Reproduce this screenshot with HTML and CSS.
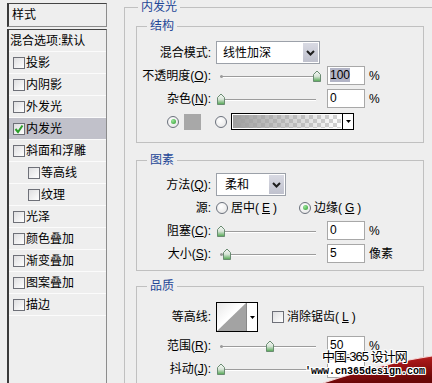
FILE: index.html
```html
<!DOCTYPE html>
<html lang="zh-CN">
<head>
    <meta charset="UTF-8">
    <meta name="viewport" content="width=device-width, initial-scale=1.0">
    <title>图层样式 - 内发光</title>
    <link rel="stylesheet" href="styles.css">
</head>
<body>

<svg class="defs" width="0" height="0" aria-hidden="true">
    <defs>
        <linearGradient id="thumbFill" x1="0" y1="0" x2="0" y2="1">
            <stop offset="0" stop-color="#f6f8f6"/>
            <stop offset="0.5" stop-color="#d8e4d8"/>
            <stop offset="1" stop-color="#4fa64f"/>
        </linearGradient>
        <symbol id="thumb" viewBox="0 0 10 12">
            <path d="M1.5 11.5V4.5L5 1l3.5 3.5v7z" fill="url(#thumbFill)" stroke="#6a8c72"/>
        </symbol>
        <symbol id="chevron" viewBox="0 0 9 6">
            <path d="M1 1l3.5 3.5L8 1" fill="none" stroke="#1e1e1e" stroke-width="2"/>
        </symbol>
        <symbol id="caret" viewBox="0 0 5 3">
            <path d="M0 0h5L2.5 3z" fill="#000"/>
        </symbol>
    </defs>
</svg>

<div class="dialog">
    <aside class="styles-panel">
        <div class="panel-title">样式</div>
        <ul class="style-list">
            <li class="blend">混合选项:默认</li>
            <li><span class="check"></span>投影</li>
            <li><span class="check"></span>内阴影</li>
            <li><span class="check"></span>外发光</li>
            <li class="active">
                <span class="check"><svg viewBox="0 0 10 10" width="10" height="10"><path d="M1.5 5l2.5 3L8.5 1.5" fill="none" stroke="#2a9f2a" stroke-width="2"/></svg></span>内发光
            </li>
            <li><span class="check"></span>斜面和浮雕</li>
            <li class="sub"><span class="check"></span>等高线</li>
            <li class="sub"><span class="check"></span>纹理</li>
            <li><span class="check"></span>光泽</li>
            <li><span class="check"></span>颜色叠加</li>
            <li><span class="check"></span>渐变叠加</li>
            <li><span class="check"></span>图案叠加</li>
            <li><span class="check"></span>描边</li>
        </ul>
    </aside>

    <main class="settings">
        <fieldset class="group outer">
            <legend>内发光</legend>

            <fieldset class="group structure">
                <legend>结构</legend>
                <div class="row">
                    <span class="label">混合模式:</span>
                    <div class="select mode"><span>线性加深</span><span class="drop"><svg><use href="#chevron"/></svg></span></div>
                </div>
                <div class="row">
                    <span class="label">不透明度(<u>O</u>):</span>
                    <div class="slider"><svg class="thumb" style="left:96px"><use href="#thumb"/></svg></div>
                    <span class="field"><span class="picked">100</span></span>
                    <span class="unit">%</span>
                </div>
                <div class="row">
                    <span class="label">杂色(<u>N</u>):</span>
                    <div class="slider"><svg class="thumb" style="left:0"><use href="#thumb"/></svg></div>
                    <span class="field">0</span>
                    <span class="unit">%</span>
                </div>
                <div class="row colors">
                    <span class="radio on"></span>
                    <span class="swatch"></span>
                    <span class="radio"></span>
                    <div class="gradient">
                        <span class="ramp"></span>
                        <span class="pick"><svg width="5" height="3"><use href="#caret"/></svg></span>
                    </div>
                </div>
            </fieldset>

            <fieldset class="group elements">
                <legend>图素</legend>
                <div class="row">
                    <span class="label">方法(<u>Q</u>):</span>
                    <div class="select method"><span>柔和</span><span class="drop"><svg><use href="#chevron"/></svg></span></div>
                </div>
                <div class="row">
                    <span class="label">源:</span>
                    <span class="choice"><span class="radio"></span>居中(<u>E</u>)</span>
                    <span class="choice"><span class="radio on"></span>边缘(<u>G</u>)</span>
                </div>
                <div class="row">
                    <span class="label">阻塞(<u>C</u>):</span>
                    <div class="slider"><svg class="thumb" style="left:0"><use href="#thumb"/></svg></div>
                    <span class="field">0</span>
                    <span class="unit">%</span>
                </div>
                <div class="row">
                    <span class="label">大小(<u>S</u>):</span>
                    <div class="slider"><svg class="thumb" style="left:6px"><use href="#thumb"/></svg></div>
                    <span class="field">5</span>
                    <span class="unit">像素</span>
                </div>
            </fieldset>

            <fieldset class="group quality">
                <legend>品质</legend>
                <div class="row tall">
                    <span class="label">等高线:</span>
                    <div class="contour">
                        <span class="curve"><svg width="29" height="28" viewBox="0 0 29 28"><path d="M0 28L29 0V28z" fill="#a3a3a3"/></svg></span>
                        <span class="pick"><svg width="5" height="3"><use href="#caret"/></svg></span>
                    </div>
                    <span class="check-label"><span class="check"></span>消除锯齿(<u>L</u>)</span>
                </div>
                <div class="row">
                    <span class="label">范围(<u>R</u>):</span>
                    <div class="slider"><svg class="thumb" style="left:49px"><use href="#thumb"/></svg></div>
                    <span class="field">50</span>
                    <span class="unit">%</span>
                </div>
                <div class="row">
                    <span class="label">抖动(<u>J</u>):</span>
                    <div class="slider"><svg class="thumb" style="left:0"><use href="#thumb"/></svg></div>
                    <span class="field"></span>
                </div>
            </fieldset>
        </fieldset>
    </main>
</div>

<div class="watermark">
    <svg class="swoosh" width="112" height="30" viewBox="0 0 112 30">
        <defs>
            <linearGradient id="red" x1="0" y1="0" x2="0.25" y2="1">
                <stop offset="0" stop-color="#e25a5a"/>
                <stop offset="0.35" stop-color="#a81818"/>
                <stop offset="1" stop-color="#6a0707"/>
            </linearGradient>
        </defs>
        <path d="M3 30C40 18 78 8 112 3V30z" fill="url(#red)"/>
        <path d="M3 30C40 18 78 8 112 3" fill="none" stroke="#f6d6d6" stroke-width="1.2"/>
    </svg>
    <span class="wm-title">中国-365 设计网</span>
    <span class="wm-url">'www.cn365design.com</span>
</div>

</body>
</html>
```

FILE: styles.css
```css
* {
    box-sizing: border-box;
}
html, body {
    margin: 0;
}
body {
    position: relative;
    width: 432px;
    height: 383px;
    overflow: hidden;
    background: #eeeeee;
    color: #000;
    font: 12px/14px "Liberation Sans", "Noto Sans CJK SC", sans-serif;
}
.defs {
    position: absolute;
}
.dialog {
    display: flex;
    align-items: flex-start;
}

/* left list of styles */
.styles-panel {
    width: 100px;
    margin: 3px 0 0 7px;
    flex: none;
}
.panel-title {
    height: 24px;
    border: 1px solid #8c8c8c;
    border-top-color: #444;
    border-left: 2px solid #3a3a3a;
    padding-left: 3px;
    line-height: 22px;
}
.style-list {
    list-style: none;
    margin: 2px 0 0;
    padding: 0;
    height: 400px;
    border: 1px solid #8c8c8c;
    border-top-color: #444;
    border-left: 2px solid #3a3a3a;
}
.style-list li {
    display: flex;
    align-items: center;
    gap: 1px;
    height: 22px;
    padding-left: 4px;
    border-bottom: 1px solid #fbfbfb;
}
.style-list li.blend {
    padding-left: 1px;
}
.style-list li.sub {
    padding-left: 19px;
}
.style-list li.active {
    background: #c1c1ca;
}
.check {
    display: inline-flex;
    align-items: center;
    justify-content: center;
    width: 12px;
    height: 12px;
    flex: none;
    border: 1px solid #6e7078;
    background: linear-gradient(135deg, #dedee0, #fff);
}

/* right settings */
.settings {
    width: 318px;
    margin-left: 17px;
    flex: none;
}
.group {
    margin: 0;
    padding: 0;
    min-width: 0;
    border: 1px solid #c0c0c0;
}
.group legend {
    margin-left: 10px;
    padding: 0 3px;
    line-height: 14px;
    color: #1f4797;
}
.outer > legend {
    margin-left: 13px;
}
.outer > .group {
    margin: 5px 17px 0 11px;
}
.structure {
    padding: 8px 0 9px !important;
}
.outer > .elements {
    margin-top: 10px;
    padding: 6px 0 5px;
}
.outer > .quality {
    margin-top: 8px;
    padding: 7px 0 30px;
}
.row {
    display: flex;
    align-items: center;
    height: 23px;
}
.row.tall {
    height: 34px;
}
.label {
    width: 74px;
    margin-right: 5px;
    text-align: right;
    flex: none;
}
.select {
    display: flex;
    align-items: center;
    height: 23px;
    padding: 0 1px 0 6px;
    border: 1px solid #9ca1a9;
    background: #fff;
    flex: none;
}
.select.mode {
    width: 104px;
}
.select.method {
    width: 70px;
    padding-left: 8px;
}
.drop {
    display: flex;
    align-items: center;
    justify-content: center;
    width: 15px;
    height: 19px;
    margin-left: auto;
    background: linear-gradient(#d9dae3, #bfc1cd);
}
.drop svg {
    width: 9px;
    height: 6px;
}
.slider {
    position: relative;
    width: 108px;
    height: 14px;
    margin-right: 3px;
    flex: none;
}
.slider::before {
    content: "";
    position: absolute;
    left: 4px;
    right: 8px;
    top: 7px;
    height: 1px;
    background: #9c9c9c;
    box-shadow: 0 1px 0 #fff;
}
.slider::after {
    content: "";
    position: absolute;
    left: 4px;
    top: 6px;
    width: 3px;
    height: 3px;
    border-radius: 50%;
    background: #9a9a9a;
}
.thumb {
    position: absolute;
    top: 1px;
    width: 10px;
    height: 12px;
    z-index: 1;
}
.field {
    width: 38px;
    height: 19px;
    padding: 0 2px;
    border: 1px solid #a8a8a8;
    background: #fff;
    line-height: 17px;
    flex: none;
}
.picked {
    background: #b2b4c6;
}
.unit {
    margin-left: 4px;
}
.radio {
    display: inline-flex;
    align-items: center;
    justify-content: center;
    width: 12px;
    height: 12px;
    flex: none;
    border: 1px solid #6b717c;
    border-radius: 50%;
    background: radial-gradient(circle at 40% 35%, #fff, #e2e2e2);
}
.radio.on::after {
    content: "";
    width: 5px;
    height: 5px;
    border-radius: 50%;
    background: radial-gradient(circle at 35% 35%, #9be59b, #2b9b2b);
}
.row.colors {
    padding-left: 30px;
}
.swatch {
    width: 17px;
    height: 16px;
    margin: 0 14px 0 5px;
    background: #a8a8a8;
}
.gradient {
    display: flex;
    width: 123px;
    height: 17px;
    margin-left: 4px;
    border: 1px solid #000;
}
.gradient .ramp {
    flex: 1;
    border: 1px solid #fff;
    background: linear-gradient(to right, #9e9e9e, rgba(158, 158, 158, 0)),
        repeating-conic-gradient(#d2d2d2 0 25%, #fff 0 50%) 0 0 / 8px 8px;
}
.pick {
    display: flex;
    align-items: center;
    justify-content: center;
    width: 11px;
    border-left: 1px solid #000;
    background: #fff;
}
.choice {
    display: flex;
    align-items: center;
    gap: 3px;
}
.choice + .choice {
    margin-left: 22px;
}
.contour {
    display: flex;
    width: 42px;
    height: 30px;
    border: 1px solid #000;
    flex: none;
}
.curve {
    width: 29px;
    background: linear-gradient(135deg, #e8e8e8, #fff 45%);
}
.curve svg {
    display: block;
}
.contour .pick {
    border-left-color: #888;
}
.check-label {
    display: flex;
    align-items: center;
    gap: 3px;
    margin-left: 14px;
}

/* site watermark lying over the corner */
.watermark {
    position: absolute;
    right: 0;
    bottom: 0;
    width: 130px;
    height: 36px;
    pointer-events: none;
}
.swoosh {
    position: absolute;
    right: 0;
    bottom: 0;
}
.wm-title,
.wm-url {
    position: absolute;
    white-space: nowrap;
    color: #000;
    text-shadow: 1px 0 #fff, -1px 0 #fff, 0 1px #fff, 0 -1px #fff,
        1px 1px #fff, -1px -1px #fff, 1px -1px #fff, -1px 1px #fff;
}
.wm-title {
    left: 20px;
    top: 2px;
    font: 13px/15px "Liberation Sans", "Noto Sans CJK SC", sans-serif;
    letter-spacing: -1px;
}
.wm-url {
    left: 3px;
    top: 19px;
    font: bold 10px/12px "Liberation Mono", monospace;
}
```
